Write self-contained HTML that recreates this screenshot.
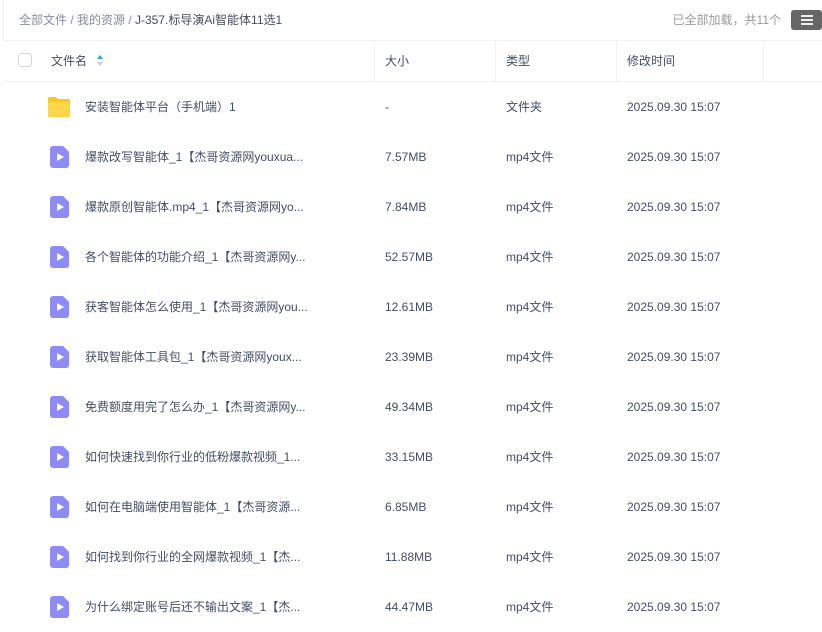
<!DOCTYPE html>
<html><head><meta charset="utf-8"><style>
*{margin:0;padding:0;box-sizing:border-box}
body{width:822px;height:624px;overflow:hidden;background:#fff;font-family:"Liberation Sans","Noto Sans CJK SC",sans-serif;font-size:12px;color:#424e67;position:relative}
.bc{position:absolute;left:19px;top:12px;font-size:12px;color:#878c9c;line-height:16px}
.bc b{font-weight:normal;color:#454d5a}
.cnt{position:absolute;right:41px;top:12px;color:#999;line-height:16px}
.btn{position:absolute;left:791px;top:10px;width:31px;height:20px;background:#666;border-radius:3px}
.btn i{position:absolute;left:10px;width:12px;height:2px;background:#eee}
.vl{position:absolute;left:3px;top:0;width:1px;height:41px;background:#f0f0f0}
.hd{position:absolute;left:3px;top:40px;width:819px;height:42px;border-top:1px solid #f0f0f0;border-bottom:1px solid #f0f0f0}
.hd span{position:absolute;top:12px;line-height:16px;color:#424e67}
.cd{position:absolute;top:0;width:1px;height:40px;background:#f0f0f0}
.cb{position:absolute;left:15px;top:12px;width:14px;height:14px;border:1px solid #d5d7dc;border-radius:3px}
.row{position:absolute;left:0;width:822px;height:50px}
.row span{position:absolute;top:17px;line-height:16px;color:#424e67}
</style></head><body>
<div class="vl"></div>
<div class="bc">全部文件 / 我的资源 / <b>J-357.标导演Ai智能体11选1</b></div>
<div class="cnt">已全部加载，共11个</div>
<div class="btn"><i style="top:5px"></i><i style="top:9px"></i><i style="top:13px"></i></div>
<div class="hd">
<div class="cb"></div>
<span style="left:48px">文件名</span>
<svg style="position:absolute;left:94px;top:14px" width="6" height="11"><path d="M3 0L6 4H0Z" fill="#2a9df4"/><path d="M3 11L6 7H0Z" fill="#c8cdd6"/></svg>
<div class="cd" style="left:371px"></div><span style="left:382px">大小</span>
<div class="cd" style="left:492px"></div><span style="left:503px">类型</span>
<div class="cd" style="left:613px"></div><span style="left:624px">修改时间</span>
<div class="cd" style="left:760px"></div>
</div>
<div id="rows"></div>
<script>
const d=[["安装智能体平台（手机端）1","-","文件夹"],["爆款改写智能体_1【杰哥资源网youxua...","7.57MB"],["爆款原创智能体.mp4_1【杰哥资源网yo...","7.84MB"],["各个智能体的功能介绍_1【杰哥资源网y...","52.57MB"],["获客智能体怎么使用_1【杰哥资源网you...","12.61MB"],["获取智能体工具包_1【杰哥资源网youx...","23.39MB"],["免费额度用完了怎么办_1【杰哥资源网y...","49.34MB"],["如何快速找到你行业的低粉爆款视频_1...","33.15MB"],["如何在电脑端使用智能体_1【杰哥资源...","6.85MB"],["如何找到你行业的全网爆款视频_1【杰...","11.88MB"],["为什么绑定账号后还不输出文案_1【杰...","44.47MB"]];
let h="";d.forEach((r,i)=>{const t=82+i*50;
const ic=i==0?'<svg style="position:absolute;left:47px;top:14px" width="24" height="22"><path d="M1 3a2 2 0 0 1 2-2h6l2 2h10a2 2 0 0 1 2 2v14a2 2 0 0 1-2 2H3a2 2 0 0 1-2-2z" fill="#fcc51f"/><rect x="1" y="6" width="22" height="15" rx="2" fill="#ffd54a"/></svg>':'<svg style="position:absolute;left:50px;top:14px" width="19" height="22"><path d="M3 0h10l6 6v13a3 3 0 0 1-3 3H3a3 3 0 0 1-3-3V3a3 3 0 0 1 3-3z" fill="#8d8cf6"/><path d="M7 7l7 4-7 4z" fill="#fff"/></svg>';
h+=`<div class="row" style="top:${t}px">${ic}<span style="left:85px">${r[0]}</span><span style="left:385px">${r[1]}</span><span style="left:506px">${r[2]||"mp4文件"}</span><span style="left:627px">2025.09.30 15:07</span></div>`});
document.getElementById("rows").innerHTML=h;
</script>
</body></html>
